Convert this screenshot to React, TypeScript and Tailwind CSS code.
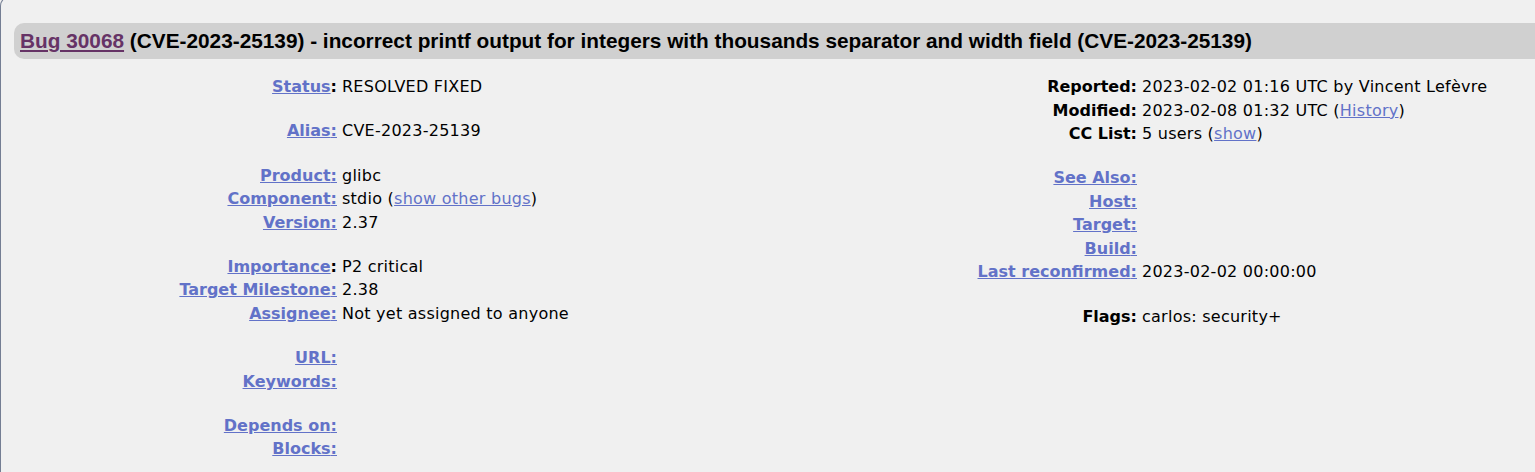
const linkCls = "text-[#6272c8] underline";

type Row = { label: string; link?: boolean; colonOut?: boolean; value?: React.ReactNode } | "gap";

const left: Row[] = [
  { label: "Status", link: true, colonOut: true, value: "RESOLVED FIXED" },
  "gap",
  { label: "Alias", link: true, value: "CVE-2023-25139" },
  "gap",
  { label: "Product", link: true, value: "glibc" },
  {
    label: "Component",
    link: true,
    value: (
      <>
        stdio (<a className={linkCls}>show other bugs</a>)
      </>
    ),
  },
  { label: "Version", link: true, value: "2.37" },
  "gap",
  { label: "Importance", link: true, colonOut: true, value: "P2 critical" },
  { label: "Target Milestone", link: true, value: "2.38" },
  { label: "Assignee", link: true, value: "Not yet assigned to anyone" },
  "gap",
  { label: "URL", link: true },
  { label: "Keywords", link: true },
  "gap",
  { label: "Depends on", link: true },
  { label: "Blocks", link: true },
];

const right: Row[] = [
  { label: "Reported", value: "2023-02-02 01:16 UTC by Vincent Lefèvre" },
  {
    label: "Modified",
    value: (
      <>
        2023-02-08 01:32 UTC (<a className={linkCls}>History</a>)
      </>
    ),
  },
  {
    label: "CC List",
    value: (
      <>
        5 users (<a className={linkCls}>show</a>)
      </>
    ),
  },
  "gap",
  { label: "See Also", link: true },
  { label: "Host", link: true },
  { label: "Target", link: true },
  { label: "Build", link: true },
  { label: "Last reconfirmed", link: true, value: "2023-02-02 00:00:00" },
  "gap",
  { label: "Flags", value: "carlos: security+" },
];

function Label({ r }: { r: Exclude<Row, "gap"> }) {
  if (!r.link) return <span className="text-black">{r.label}:</span>;
  if (r.colonOut)
    return (
      <>
        <a className={linkCls}>{r.label}</a>
        <span className="text-black">:</span>
      </>
    );
  return <a className={linkCls}>{r.label}:</a>;
}

function Fields({ rows }: { rows: Row[] }) {
  return (
    <div className="flex flex-col">
      {rows.map((r, i) =>
        r === "gap" ? (
          <div key={i} className="h-[20.8px]" />
        ) : (
          <div key={i} className="flex h-[23.5px] items-center leading-[23.5px]">
            <div className="w-[336px] shrink-0 text-right font-bold">
              <Label r={r} />
            </div>
            <div className="pl-[5px] whitespace-nowrap tracking-[0.25px] text-black">{r.value}</div>
          </div>
        )
      )}
    </div>
  );
}

export default function App() {
  return (
    <div className="min-h-[472px] w-[1535px] overflow-hidden bg-[#f0f0f0] font-['DejaVu_Sans',Verdana,sans-serif] text-[16px]">
      <div className="-mt-[4px] min-h-[476px] rounded-tl-[10px] border-l border-t border-[#747e93] pt-[26px] pl-[13px]">
        <div className="-mr-[20px] flex h-[36px] items-center rounded-l-[10px] bg-[#d0d0d0] pl-[6px] font-['Liberation_Sans',Arial,sans-serif] text-[20.8px] font-bold text-black">
          <a className="text-[#663366] underline">Bug 30068</a>
          <span>&nbsp;(CVE-2023-25139) - incorrect printf output for integers with thousands separator and width field (CVE-2023-25139)</span>
        </div>
        <div className="-ml-[13px] mt-[16px] flex">
          <div className="w-[800px] shrink-0">
            <Fields rows={left} />
          </div>
          <div>
            <Fields rows={right} />
          </div>
        </div>
      </div>
    </div>
  );
}
